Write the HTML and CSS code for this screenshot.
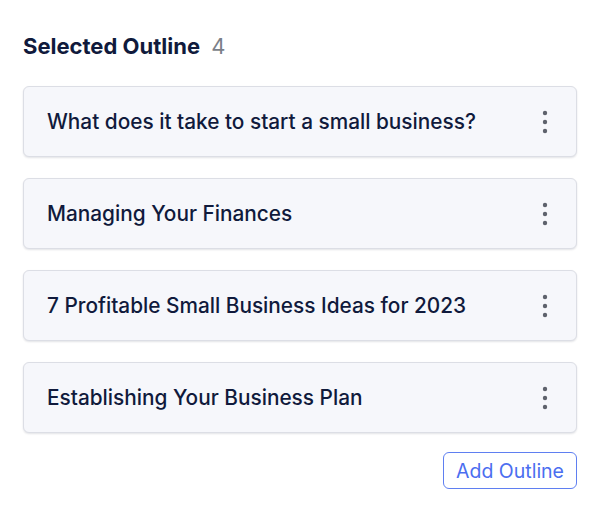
FILE: index.html
```html
<!DOCTYPE html>
<html lang="en">
<head>
    <meta charset="UTF-8">
    <meta name="viewport" content="width=device-width, initial-scale=1.0">
    <title>Selected Outline</title>
    <link rel="stylesheet" href="styles.css">
</head>
<body>
    <div class="panel">
        <h2 class="panel-title">Selected Outline <span class="count">4</span></h2>

        <ul class="outline-list">
            <li class="outline-item">
                <span class="outline-text">What does it take to start a small business?</span>
                <button class="menu-btn" aria-label="More"><svg width="6" height="24" viewBox="0 0 6 24"><circle cx="3" cy="3" r="2.2"/><circle cx="3" cy="12" r="2.2"/><circle cx="3" cy="21" r="2.2"/></svg></button>
            </li>
            <li class="outline-item">
                <span class="outline-text">Managing Your Finances</span>
                <button class="menu-btn" aria-label="More"><svg width="6" height="24" viewBox="0 0 6 24"><circle cx="3" cy="3" r="2.2"/><circle cx="3" cy="12" r="2.2"/><circle cx="3" cy="21" r="2.2"/></svg></button>
            </li>
            <li class="outline-item">
                <span class="outline-text">7 Profitable Small Business Ideas for 2023</span>
                <button class="menu-btn" aria-label="More"><svg width="6" height="24" viewBox="0 0 6 24"><circle cx="3" cy="3" r="2.2"/><circle cx="3" cy="12" r="2.2"/><circle cx="3" cy="21" r="2.2"/></svg></button>
            </li>
            <li class="outline-item">
                <span class="outline-text">Establishing Your Business Plan</span>
                <button class="menu-btn" aria-label="More"><svg width="6" height="24" viewBox="0 0 6 24"><circle cx="3" cy="3" r="2.2"/><circle cx="3" cy="12" r="2.2"/><circle cx="3" cy="21" r="2.2"/></svg></button>
            </li>
        </ul>

        <div class="actions">
            <button class="add-btn">Add Outline</button>
        </div>
    </div>
</body>
</html>
```

FILE: styles.css
```css
body {
    font-family: Inter, "Noto Sans", sans-serif;
    margin: 0;
    padding: 0;
    background-color: #fff;
    color: #101a3c;
}
.panel {
    padding: 31px 23px 0 23px;
}
.panel-title {
    margin: 0 0 25px 0;
    font-size: 22px;
    font-weight: 700;
    line-height: 30px;
    color: #101a3c;
}
.panel-title .count {
    margin-left: 6px;
    font-weight: 400;
    color: #7b7f89;
}
.outline-list {
    list-style: none;
    margin: 0;
    padding: 0;
    display: flex;
    flex-direction: column;
    gap: 21px;
}
.outline-item {
    display: flex;
    align-items: center;
    justify-content: space-between;
    height: 69px;
    padding: 0 28px 0 23px;
    background-color: #f6f7fb;
    border: 1px solid #dcdee5;
    border-radius: 6px;
    box-shadow: 0 1px 2px rgba(20, 25, 50, 0.12);
}
.outline-text {
    font-size: 20.8px;
    font-weight: 500;
    color: #101a3c;
}
.menu-btn {
    background: none;
    border: none;
    padding: 0;
    display: flex;
    cursor: pointer;
}
.menu-btn svg {
    fill: #5e626c;
}
.actions {
    display: flex;
    justify-content: flex-end;
    margin-top: 19px;
}
.add-btn {
    font-family: Inter, "Noto Sans", sans-serif;
    font-size: 19.5px;
    color: #4b6ef0;
    background-color: #fff;
    border: 1.5px solid #5f7ff1;
    border-radius: 6px;
    padding: 0 12px;
    height: 37px;
    cursor: pointer;
}
```
